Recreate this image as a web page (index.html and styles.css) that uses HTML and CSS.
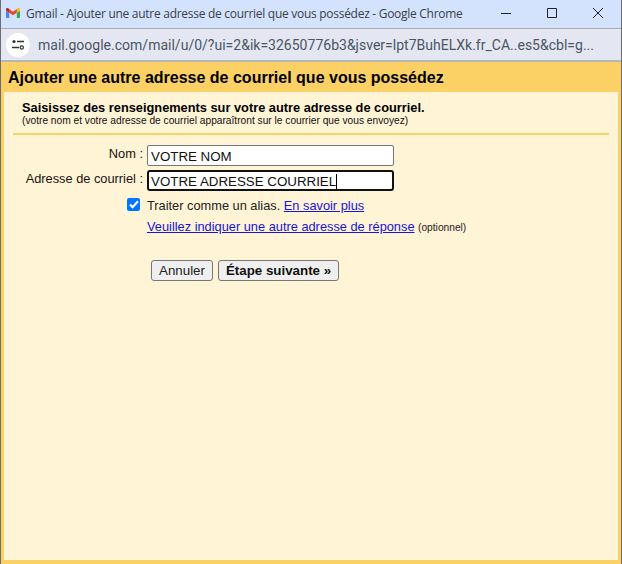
FILE: index.html
```html
<!DOCTYPE html>
<html lang="fr">
<head>
<meta charset="utf-8">
<title>Gmail</title>
<link rel="stylesheet" href="styles.css">
</head>
<body>
<div class="window">
  <div class="titlebar">
    <svg class="gmail" width="14" height="10" viewBox="0 0 15 12" preserveAspectRatio="none">
      <path d="M1 12h2.4V5.6L0 3v7.9C0 11.5.5 12 1 12z" fill="#4285f4"/>
      <path d="M11.6 12H14c.5 0 1-.5 1-1.1V3l-3.4 2.6z" fill="#34a853"/>
      <path d="M11.6 1.2v4.4L15 3V1.6C15 .3 13.6-.4 12.6.4z" fill="#fbbc04"/>
      <path d="M3.4 5.6V1.2l4.1 3.2 4.1-3.2v4.4L7.5 8.7z" fill="#ea4335"/>
      <path d="M0 1.6V3l3.4 2.6V1.2L2.4.4C1.4-.4 0 .3 0 1.6z" fill="#c5221f"/>
    </svg>
    <span class="title">Gmail - Ajouter une autre adresse de courriel que vous possédez - Google Chrome</span>
    <div class="controls">
      <svg width="12" height="12" viewBox="0 0 12 12"><path d="M1 6.5h10" stroke="#222" fill="none"/></svg>
      <svg width="12" height="12" viewBox="0 0 12 12"><path d="M1.5 1.5h9v9h-9z" stroke="#222" fill="none"/></svg>
      <svg width="12" height="12" viewBox="0 0 12 12"><path d="M1 1l10 10M11 1L1 11" stroke="#222" fill="none"/></svg>
    </div>
  </div>
  <div class="toolbar">
    <span class="site-btn">
      <svg width="12" height="11" viewBox="0 0 12 11">
        <circle cx="2" cy="2.5" r="1.6" fill="#333"/>
        <path d="M5 2.5h7M0 8.5h7" stroke="#333" stroke-width="1.4" fill="none"/>
        <circle cx="9.8" cy="8.5" r="1.6" fill="none" stroke="#333" stroke-width="1.2"/>
      </svg>
    </span>
    <span class="url">mail.google.com/mail/u/0/?ui=2&amp;ik=32650776b3&amp;jsver=lpt7BuhELXk.fr_CA..es5&amp;cbl=g...</span>
  </div>
  <div class="dialog">
    <h1 class="heading">Ajouter une autre adresse de courriel que vous possédez</h1>
    <div class="panel">
      <div class="intro">
        <div class="intro-title">Saisissez des renseignements sur votre autre adresse de courriel.</div>
        <div class="intro-note">(votre nom et votre adresse de courriel apparaîtront sur le courrier que vous envoyez)</div>
      </div>
      <div class="form">
        <label class="label">Nom :</label>
        <div class="field"><span class="input">VOTRE NOM</span></div>
        <label class="label">Adresse de courriel :</label>
        <div class="field"><span class="input input-focus">VOTRE ADRESSE COURRIEL<i class="caret"></i></span></div>
        <div class="check-cell"><span class="checkbox"><svg width="10" height="9" viewBox="0 0 10 9"><path d="M1 4.5l2.6 2.7L9 1.2" stroke="#fff" stroke-width="2.2" fill="none"/></svg></span></div>
        <div class="line">Traiter comme un alias. <a href="#">En savoir plus</a></div>
        <div></div>
        <div class="line"><a href="#">Veuillez indiquer une autre adresse de réponse</a> <small class="optional">(optionnel)</small></div>
      </div>
      <div class="actions">
        <button class="btn">Annuler</button>
        <button class="btn btn-primary">Étape suivante »</button>
      </div>
    </div>
  </div>
</div>
</body>
</html>
```
FILE: styles.css
```css
* { box-sizing: border-box; }
html, body { margin: 0; height: 100%; }
body { width: 622px; height: 564px; overflow: hidden; font-family: "Liberation Sans", Arial, sans-serif; }
.window { height: 564px; display: flex; flex-direction: column; border-left: 1px solid #6d6d6d; border-right: 1px solid #6d6d6d; background: #e4e7f1; }
.titlebar { height: 29px; flex: none; display: flex; align-items: center; background: #d3e3fd; border-bottom: 1px solid #a9abb0; padding: 0 0 2px 5px; }
.gmail { flex: none; margin: 0 6px 1px 0; }
.title { font: 12px "Open Sans", sans-serif; color: #3a3f47; white-space: nowrap; letter-spacing: -0.28px; }
.controls { margin-left: auto; display: flex; gap: 34px; padding-right: 17px; align-items: center; }
.controls svg { display: block; }
.toolbar { height: 33px; flex: none; display: flex; align-items: center; background: #e4e7f1; border-bottom: 2px solid #b4b6ba; padding-left: 5px; }
.site-btn { width: 24px; height: 24px; border-radius: 50%; background: #fff; display: flex; align-items: center; justify-content: center; margin-right: 8px; }
.url { font: 14px Roboto, sans-serif; color: #4a5666; white-space: nowrap; letter-spacing: 0.01px; }
.dialog { flex: 1; display: flex; flex-direction: column; background: #fbd165; padding: 0 3px 4px 3px; }
.heading { margin: 0; height: 30px; flex: none; font-size: 16px; line-height: 31px; font-weight: bold; color: #000; padding-left: 4px; }
.panel { flex: 1; background: #fff4d6; padding: 0 9px; }
.intro { height: 43px; padding: 9px 0 0 9px; border-bottom: 2px solid #fbd165; }
.intro-title { font-size: 12.8px; line-height: 14px; font-weight: bold; color: #000; }
.intro-note { font-size: 10.2px; line-height: 12px; color: #111; }
.form { display: grid; grid-template-columns: 130px 1fr; column-gap: 4px; grid-auto-rows: min-content; padding-top: 10px; }
.label { font-size: 12.8px; text-align: right; color: #211; line-height: 15px; height: 25px; white-space: nowrap; padding-top: 1px; }
.field { height: 25px; }
.input { display: block; width: 247px; height: 21px; background: #fff; border: 1px solid #767676; border-radius: 2px; font-size: 13.333px; line-height: 21px; color: #111; padding-left: 3px; white-space: nowrap; }
.input-focus { border: 2px solid #101010; border-radius: 3px; line-height: 19px; padding-left: 2px; }
.caret { display: inline-block; width: 1px; height: 15px; background: #000; vertical-align: -3px; }
.check-cell { display: flex; justify-content: flex-end; padding-right: 3px; }
.checkbox { width: 13px; height: 13px; margin-top: 3px; border-radius: 2px; background: #0075ff; display: flex; align-items: center; justify-content: center; }
.line { font-size: 12.8px; line-height: 15px; height: 21px; color: #222; padding-top: 3px; white-space: nowrap; }
.line a { color: #1515e0; }
.optional { font-size: 10.2px; color: #222; }
.actions { display: flex; gap: 5px; padding: 23px 0 0 138px; }
.btn { height: 21px; padding: 0 7px; font: 13.333px "Liberation Sans", Arial, sans-serif; background: #efefef; border: 1px solid #767676; border-radius: 3px; color: #222; }
.btn-primary { font-weight: bold; color: #111; }
```
